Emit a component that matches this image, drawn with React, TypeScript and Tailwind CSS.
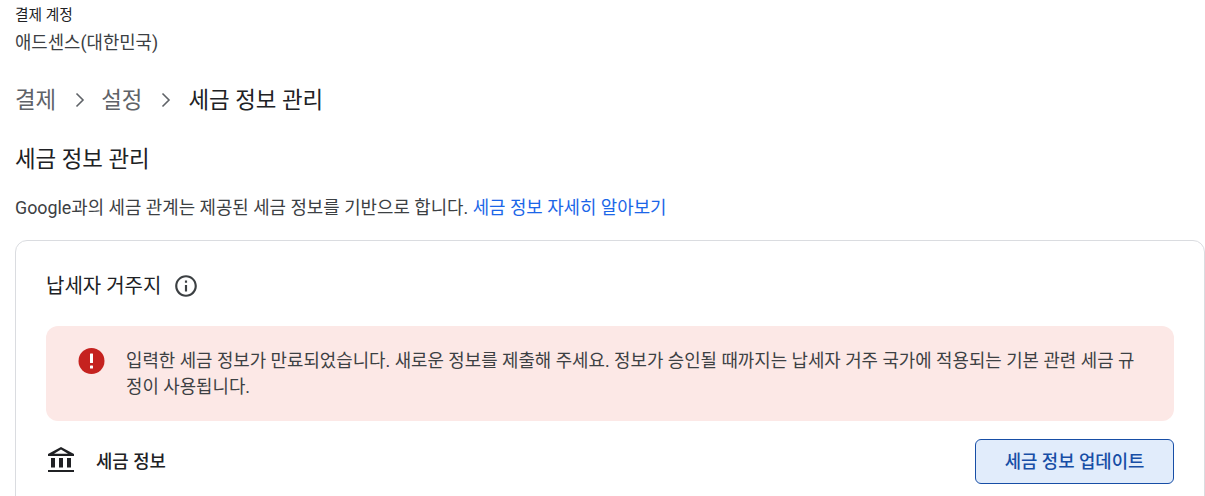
const FONT = "font-['Roboto','Noto_Sans_CJK_KR',sans-serif]";

function ChevronIcon() {
  return (
    <svg width="24" height="24" viewBox="0 0 24 24" fill="none" stroke="#5f6368" strokeWidth="1.6" className="ml-[12px] mr-[9px] shrink-0">
      <path d="M8.5 5.5 15 12l-6.5 6.5" />
    </svg>
  );
}

function InfoIcon() {
  return (
    <svg width="26" height="26" viewBox="0 0 24 24" fill="#3c4043">
      <path d="M11 7h2v2h-2zm0 4h2v6h-2zm1-9C6.48 2 2 6.48 2 12s4.48 10 10 10 10-4.48 10-10S17.52 2 12 2zm0 18c-4.41 0-8-3.59-8-8s3.59-8 8-8 8 3.59 8 8-3.59 8-8 8z" />
    </svg>
  );
}

function ErrorIcon() {
  return (
    <svg width="30" height="30" viewBox="0 0 30 30">
      <circle cx="15.5" cy="15" r="13" fill="#c5221f" />
      <rect x="14" y="7.5" width="3" height="9.5" rx="0.5" fill="#fff" />
      <rect x="14" y="19.5" width="3" height="3" rx="0.5" fill="#fff" />
    </svg>
  );
}

function BankIcon() {
  return (
    <svg width="26" height="26" viewBox="0 0 26 26" fill="#202124" className="-mt-[3px] ml-[2px] mr-[2px]">
      <path fillRule="evenodd" d="M13 0 26 7v2H0V7zM13 2.6 6 6.8h14z" />
      <rect x="3" y="11" width="4" height="9.5" />
      <rect x="11" y="11" width="4" height="9.5" />
      <rect x="19" y="11" width="4" height="9.5" />
      <rect x="0" y="23" width="26" height="2" />
    </svg>
  );
}

export default function App() {
  return (
    <div className={`${FONT} h-[496px] w-[1205px] overflow-hidden bg-white pl-[15px] text-[#202124]`}>
      <div className="pt-[6px] text-[14.7px] leading-[18px]">결제 계정</div>
      <div className="mt-[7px] text-[17.8px] leading-[24px] text-[#3c4043]">애드센스(대한민국)</div>

      {/* breadcrumb */}
      <div className="mt-[29px] flex h-[32px] items-center text-[22.4px] leading-[32px]">
        <span className="text-[#5f6368]">결제</span>
        <ChevronIcon />
        <span className="text-[#5f6368]">설정</span>
        <ChevronIcon />
        <span className="ml-[1px]">세금 정보 관리</span>
      </div>

      <h1 className="mt-[27px] text-[22.4px] font-normal leading-[32px]">세금 정보 관리</h1>
      <p className="mt-[21px] text-[17.85px] leading-[24px] text-[#3c4043]">
        Google과의 세금 관계는 제공된 세금 정보를 기반으로 합니다.{" "}
        <a className="text-[#1b66e8]">세금 정보 자세히 알아보기</a>
      </p>

      <div className="mt-[20px] h-[300px] w-[1190px] rounded-[12px] border border-[#dadce0] px-[30px] pt-[29px]">
        <div className="flex h-[32px] items-center gap-[12px]">
          <h2 className="text-[20px] font-normal leading-[32px]">납세자 거주지</h2>
          <InfoIcon />
        </div>

        <div className="mt-[24px] flex h-[95px] items-start rounded-[12px] bg-[#fce8e6] pl-[30px] pr-[30px] pt-[20px]">
          <div className="mr-[20px] shrink-0">
            <ErrorIcon />
          </div>
          <p className="mt-[2px] text-[17.85px] leading-[26px] text-[#3c4043]">
            입력한 세금 정보가 만료되었습니다. 새로운 정보를 제출해 주세요. 정보가 승인될 때까지는 납세자 거주 국가에 적용되는 기본 관련 세금 규정이 사용됩니다.
          </p>
        </div>

        <div className="mt-[18px] flex items-center justify-between">
          <div className="flex items-center gap-[20px]">
            <BankIcon />
            <span className="mt-[2px] text-[17.8px] font-medium">세금 정보</span>
          </div>
          <button className="h-[45px] w-[199px] rounded-[6px] border border-[#174ea6] bg-[#e1ecfb] pt-[1px] text-[17.8px] font-medium text-[#174ea6]">
            세금 정보 업데이트
          </button>
        </div>
      </div>
    </div>
  );
}
